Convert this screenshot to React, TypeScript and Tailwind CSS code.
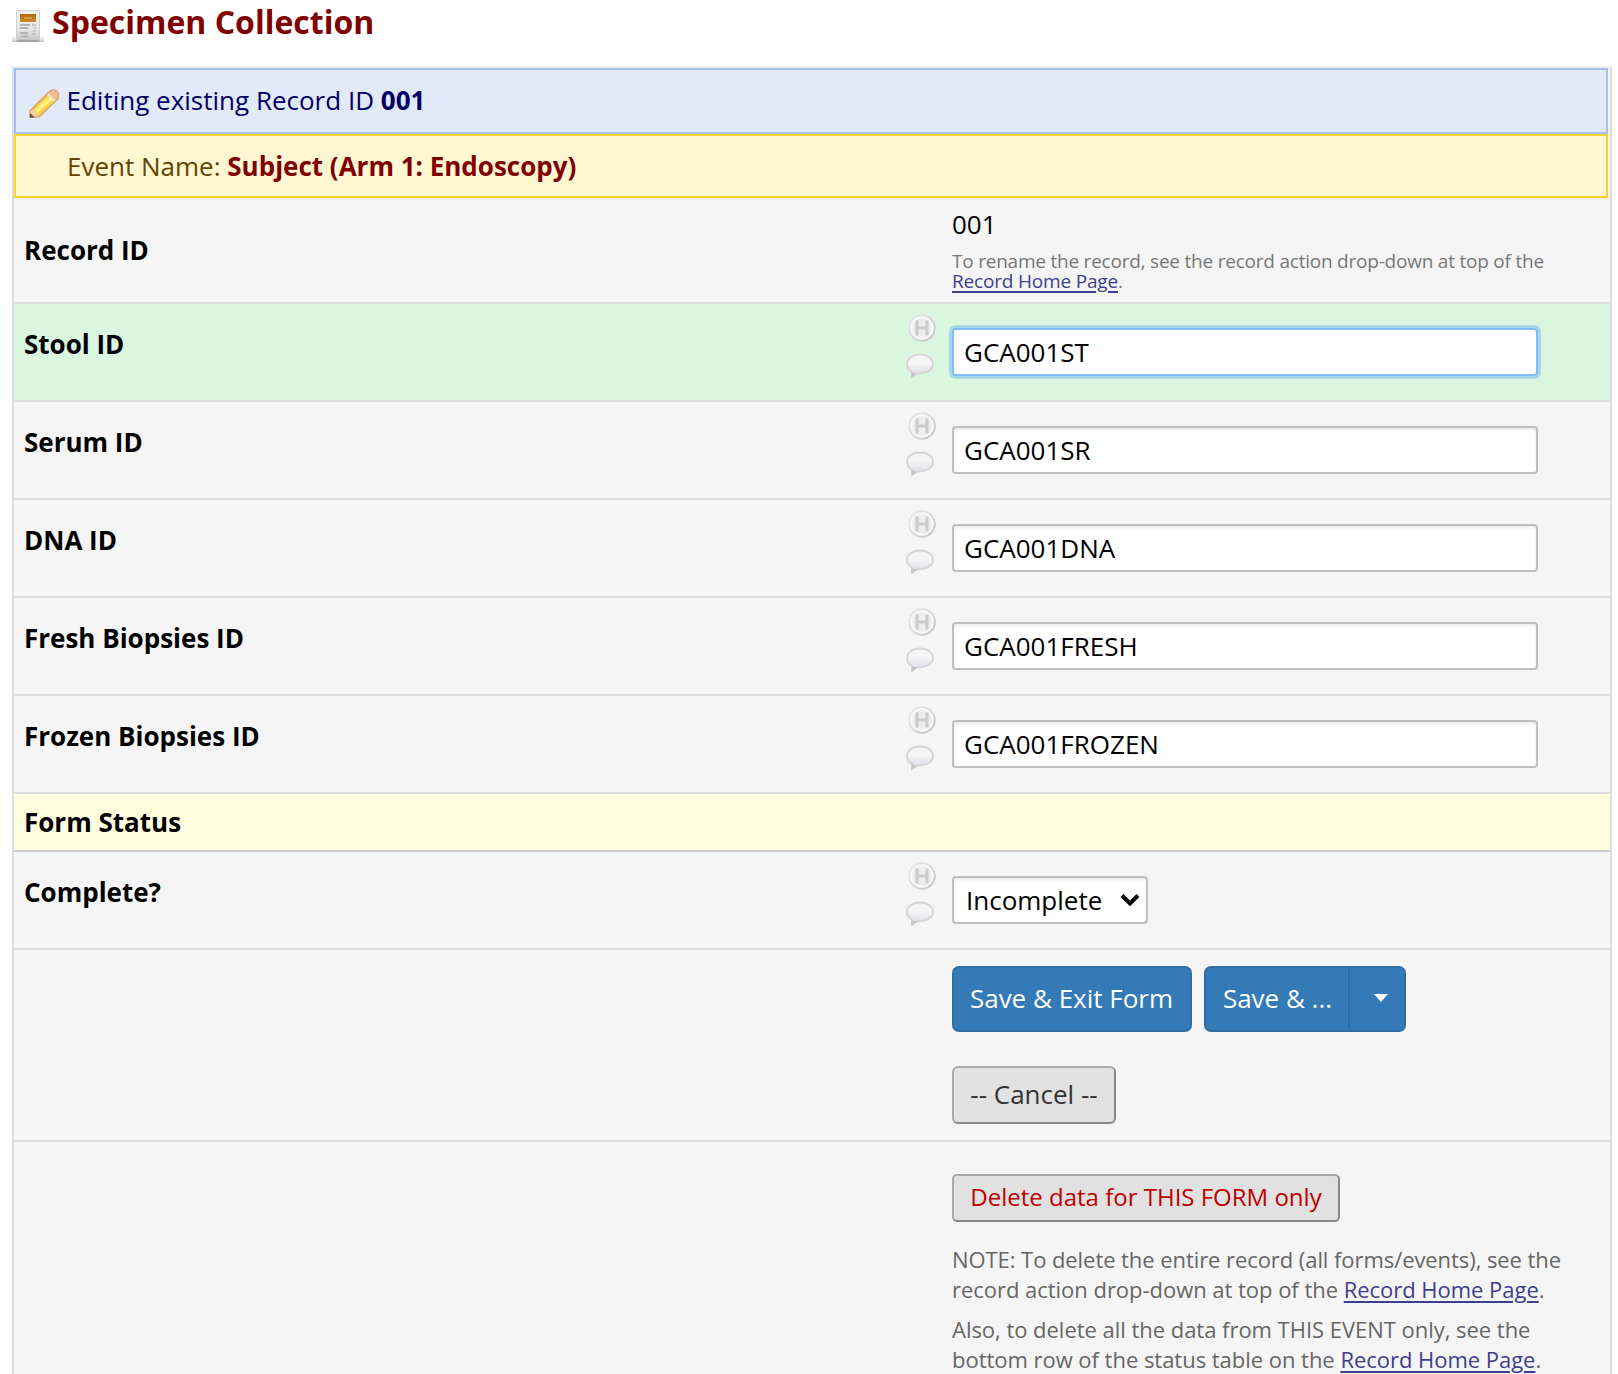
import type { ReactNode } from "react";

const fields = [
  { label: "Stool ID", value: "GCA001ST", active: true },
  { label: "Serum ID", value: "GCA001SR", active: false },
  { label: "DNA ID", value: "GCA001DNA", active: false },
  { label: "Fresh Biopsies ID", value: "GCA001FRESH", active: false },
  { label: "Frozen Biopsies ID", value: "GCA001FROZEN", active: false },
];

function FormIcon() {
  return (
    <svg width="32" height="32" viewBox="0 0 32 32" className="shrink-0">
      <defs>
        <linearGradient id="paper" x1="0" y1="0" x2="0" y2="1">
          <stop offset="0" stopColor="#f0f0f0" />
          <stop offset=".6" stopColor="#e8e8e8" />
          <stop offset="1" stopColor="#c4c4c4" />
        </linearGradient>
        <linearGradient id="head" x1="0" y1="0" x2="0" y2="1">
          <stop offset="0" stopColor="#b06a08" />
          <stop offset="1" stopColor="#d08a28" />
        </linearGradient>
        <linearGradient id="floor" x1="0" y1="0" x2="0" y2="1">
          <stop offset="0" stopColor="#bbb" stopOpacity="0" />
          <stop offset="1" stopColor="#aaa" stopOpacity=".7" />
        </linearGradient>
      </defs>
      <rect x="0" y="26" width="32" height="6" fill="url(#floor)" />
      <rect x="4.5" y=".5" width="23" height="30.5" rx="1" fill="url(#paper)" stroke="#cfcfcf" />
      <path d="M4.500 31h23" stroke="#999" strokeWidth="1.500" />
      <rect x="8" y="4" width="16" height="8" fill="url(#head)" />
      <path d="M12 7h8v2h-8z" fill="#f0c88c" opacity=".45" />
      <path d="M8 15h10M8 18h8M8 23h8M9 26.500h7" stroke="#b4b4b4" strokeWidth="2" />
      <path d="M20 15h4M22 18h2M21 21h3M20 24h4" stroke="#c6c6c6" strokeWidth="2" />
    </svg>
  );
}

function PencilIcon() {
  return (
    <svg width="32" height="32" viewBox="0 0 32 32" className="shrink-0">
      <path
        d="M2 29.500V22.500L20.500 4q5-4 8.500-1t1 8L12 28.500l-6 1z"
        fill="#e6b060"
        stroke="#cf9c62"
        strokeWidth="1"
      />
      <path d="M5 21.500L20.500 6.500l6 6.500L11 27.500z" fill="#f7d64a" />
      <path d="M7.500 21.500L21.500 8.500l3 3L10 24.500z" fill="#fdf07c" />
      <path d="M21 5q4.500-4 7.500-1.500t1 7L27.500 12.500l-6.500-7z" fill="#edbd8c" />
      <path d="M20 6l6.500 7" stroke="#f3ead6" strokeWidth="2" />
      <path d="M2.500 28.500V23l2.500-1.500 3 2 3.500 4-5 1.500z" fill="#f0cfa0" />
      <path d="M1.800 29.800V25l5 4.300z" fill="#6e5040" />
    </svg>
  );
}

function HistoryIcon() {
  return (
    <svg width="28" height="28" viewBox="0 0 28 28" className="ml-0.5 block">
      <defs>
        <linearGradient id="ring" x1="0" y1="0" x2="1" y2="1">
          <stop offset="0" stopColor="#e8e8e8" />
          <stop offset=".5" stopColor="#dadada" />
          <stop offset="1" stopColor="#c2c2c2" />
        </linearGradient>
      </defs>
      <circle cx="14" cy="14" r="12.800" fill="#fafafa" stroke="url(#ring)" strokeWidth="2" />
      <circle cx="14" cy="14" r="10" fill="#ededed" />
      <path d="M9 6.500v15M19 6.500v15M9 14h10" stroke="#cbcbcb" strokeWidth="3" fill="none" />
    </svg>
  );
}

function BalloonIcon() {
  return (
    <svg width="28" height="26" viewBox="0 0 28 26" className="mt-[11px] block">
      <defs>
        <linearGradient id="balloon" x1="0" y1="0" x2="0" y2="1">
          <stop offset="0" stopColor="#f4f4f5" />
          <stop offset=".35" stopColor="#f6f6f7" />
          <stop offset=".8" stopColor="#e2e1e9" />
        </linearGradient>
      </defs>
      <path
        d="M14 1.500C6.500 1.500 1 5.500 1 11c0 3.500 2 6.200 5 7.800L6 24l6-4c8.500.9 15-3.500 15-9 0-5.500-5.500-9.500-13-9.500z"
        fill="url(#balloon)"
        stroke="#d6d6d8"
        strokeWidth="2"
      />
      <path d="M5.500 19v5.500l5-3.800z" fill="#c2c2c4" />
    </svg>
  );
}

function Row({
  label,
  active = false,
  children,
}: {
  label: string;
  active?: boolean;
  children: ReactNode;
}) {
  return (
    <div className={`flex h-[98px] border-b-2 border-[#ddd] ${active ? "bg-[#daf6df]" : "bg-[#f5f5f5]"}`}>
      <div className="w-[892px] pt-[22px] pl-[10px] leading-[36px] font-bold">{label}</div>
      <div className="w-[46px] pt-[10px]">
        <HistoryIcon />
        <BalloonIcon />
      </div>
      <div className="pt-[24px]">{children}</div>
    </div>
  );
}

function HomeLink() {
  return (
    <a href="#" className="text-[#3e3e8e] underline decoration-2 underline-offset-[3px]">
      Record Home Page
    </a>
  );
}

export default function App() {
  return (
    <div className="h-[1374px] overflow-hidden bg-white pl-3 font-['Open_Sans',sans-serif] text-[26px] text-black">
      <h1 className="flex h-[66px] items-start gap-2 pt-[10px] text-[#800000]">
        <FormIcon />
        <span className="-mt-2 text-[32px] leading-[40px] font-bold">Specimen Collection</span>
      </h1>

      <div className="h-[1320px] w-[1600px] border-2 border-[#ddd] border-t-[#eee] bg-[#f5f5f5]">
        <div className="flex h-[66px] w-[1594px] items-start border-2 border-[#a3bff0] bg-[#e2e9f9] pt-[12px] pl-[12px] leading-[36px] text-[#000066]">
          <div className="mt-[6px] mr-[6.5px]">
            <PencilIcon />
          </div>
          <div>
            Editing existing Record ID <b>001</b>
          </div>
        </div>
        <div className="h-[64px] w-[1594px] border-2 border-[#fad42a] bg-[#fff6d2] pt-[12px] pl-[51px] leading-[36px] text-[#664400]">
          Event Name: <b className="text-[#800000]">Subject (Arm 1: Endoscopy)</b>
        </div>

        <div className="flex h-[106px] border-t-2 border-b-2 border-t-[#f0f0f0] border-b-[#ddd]">
          <div className="w-[938px] pt-[32px] pl-[10px] leading-[36px] font-bold">Record ID</div>
          <div className="pt-[6px]">
            <div className="leading-[36px]">001</div>
            <div className="mt-[9px] text-[19px] leading-[20px] whitespace-nowrap text-[#777]">
              <div className="tracking-[-0.22px]">
                To rename the record, see the record action drop-down at top of the
              </div>
              <div className="tracking-[-0.18px]">
                <HomeLink />.
              </div>
            </div>
          </div>
        </div>

        {fields.map((f) => (
          <Row key={f.label} label={f.label} active={f.active}>
            <input
              readOnly
              value={f.value}
              className={`block h-[48px] w-[586px] rounded-[4px] border-2 bg-white px-[10px] leading-[36px] outline-none ${
                f.active
                  ? "border-[#80bdff] shadow-[0_0_0_3px_#a5d8e4]"
                  : "border-[#bfbfbf] shadow-[inset_0_2px_3px_rgba(0,0,0,0.08)]"
              }`}
            />
          </Row>
        ))}

        <div className="h-[58px] border-b-2 border-[#ccc] bg-[#ffffe0] pt-[10px] pl-[10px] leading-[36px] font-bold">
          Form Status
        </div>

        <Row label="Complete?">
          <div className="flex h-[48px] w-[196px] items-center justify-between rounded-[4px] border-2 border-[#bfbfbf] bg-white pr-[6px] pl-[12px] leading-[36px] shadow-[inset_0_2px_3px_rgba(0,0,0,0.08)]">
            Incomplete
            <svg width="20" height="14" viewBox="0 0 20 14">
              <path d="M2 2.500l8 8 8-8" fill="none" stroke="#000" strokeWidth="4" />
            </svg>
          </div>
        </Row>

        <div className="h-[192px] border-b-2 border-[#ddd] pt-[16px] pl-[938px]">
          <div className="flex h-[66px] gap-3 text-white">
            <button className="w-[240px] rounded-[7px] border-2 border-[#2e6da4] bg-[#337ab7] pr-px pb-[2px]">
              Save &amp; Exit Form
            </button>
            <div className="flex">
              <button className="w-[146px] rounded-l-[7px] border-2 border-[#2e6da4] bg-[#337ab7] pb-[2px] pl-px">
                Save &amp; ...
              </button>
              <button className="flex w-[56px] items-center justify-center rounded-r-[7px] border-2 border-l-0 border-[#2e6da4] bg-[#337ab7] pb-[2px] pl-[8px]">
                <svg width="14" height="8" viewBox="0 0 14 8">
                  <path d="M0 0h14L7 8z" fill="#fff" />
                </svg>
              </button>
            </div>
          </div>
          <button className="mt-[34px] block h-[58px] w-[164px] rounded-[6px] border-2 border-t-[#aaa] border-r-[#888] border-b-[#888] border-l-[#aaa] bg-[#e1e1e1] pb-[2px] text-[#333]">
            -- Cancel --
          </button>
        </div>

        <div className="pt-[32px] pl-[938px]">
          <button className="block h-[48px] w-[388px] rounded-[5px] border-2 border-t-[#aaa] border-r-[#888] border-b-[#888] border-l-[#aaa] bg-[#e1e1e1] pb-[2px] text-[24px] text-[#c00000]">
            Delete data for THIS FORM only
          </button>
          <div className="mt-[22px] text-[22px] leading-[30px] tracking-[-0.03px] whitespace-nowrap text-[#666]">
            <p>
              <span className="tracking-[-0.07px]">
                NOTE: To delete the entire record (all forms/events), see the
              </span>
              <br />
              record action drop-down at top of the <HomeLink />.
            </p>
            <p className="mt-[10px]">
              Also, to delete all the data from THIS EVENT only, see the
              <br />
              bottom row of the status table on the <HomeLink />.
            </p>
          </div>
        </div>
      </div>
    </div>
  );
}
